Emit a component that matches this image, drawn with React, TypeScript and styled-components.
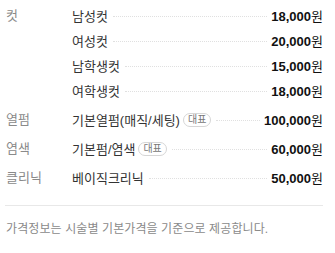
import React from "react"
import styled, { createGlobalStyle } from "styled-components"

interface PriceItem {
  name: string
  price: string
  featured?: boolean
}

interface PriceGroup {
  category: string
  items: PriceItem[]
}

const groups: PriceGroup[] = [
  {
    category: "컷",
    items: [
      { name: "남성컷", price: "18,000" },
      { name: "여성컷", price: "20,000" },
      { name: "남학생컷", price: "15,000" },
      { name: "여학생컷", price: "18,000" },
    ],
  },
  {
    category: "열펌",
    items: [{ name: "기본열펌(매직/세팅)", price: "100,000", featured: true }],
  },
  {
    category: "염색",
    items: [{ name: "기본펌/염색", price: "60,000", featured: true }],
  },
  {
    category: "클리닉",
    items: [{ name: "베이직크리닉", price: "50,000" }],
  },
]

const GlobalStyle = createGlobalStyle`
  body {
    margin: 0;
    background: #fff;
    font-family: "Liberation Sans", "Noto Sans CJK KR", sans-serif;
  }
`

export default function App() {
  return (
    <>
      <GlobalStyle />
      <S.Wrapper>
        <S.List>
          {groups.map((group) => (
            <S.Group key={group.category}>
              <S.Category>{group.category}</S.Category>
              <S.Items>
                {group.items.map((item) => (
                  <S.Row key={item.name}>
                    <S.Name>{item.name}</S.Name>
                    {item.featured && <S.Badge>대표</S.Badge>}
                    <S.Leader />
                    <S.Price>
                      <b>{item.price}</b>원
                    </S.Price>
                  </S.Row>
                ))}
              </S.Items>
            </S.Group>
          ))}
        </S.List>
        <S.Notice>가격정보는 시술별 기본가격을 기준으로 제공합니다.</S.Notice>
      </S.Wrapper>
    </>
  )
}

const S = {
  Wrapper: styled.div`
    width: 318px;
    padding: 3px 12px 0 5px;
  `,
  List: styled.div`
    display: flex;
    flex-direction: column;
    gap: 4px;
    padding-bottom: 15px;
    border-bottom: 1px solid #e8e8e8;
  `,
  Group: styled.div`
    display: grid;
    grid-template-columns: 67px 1fr;
  `,
  Category: styled.div`
    padding-left: 1px;
    height: 25px;
    line-height: 25px;
    font-size: 13px;
    color: #8a8a8a;
  `,
  Items: styled.div`
    display: flex;
    flex-direction: column;
  `,
  Row: styled.div`
    display: flex;
    align-items: center;
    height: 25px;
    font-size: 13px;
  `,
  Name: styled.span`
    color: #333;
    white-space: nowrap;
  `,
  Badge: styled.span`
    margin-left: 3px;
    height: 14px;
    padding: 0 4px;
    border: 1px solid #d6d6d6;
    border-radius: 8px;
    box-sizing: border-box;
    font-size: 10px;
    line-height: 12px;
    color: #777;
  `,
  Leader: styled.span`
    flex: 1;
    margin: 1px 4px 0 5px;
    border-top: 1px dotted #e0e0e0;
  `,
  Price: styled.span`
    color: #111;
    white-space: nowrap;
    b {
      font-weight: 700;
    }
  `,
  Notice: styled.p`
    margin: 13px 0 0 1px;
    font-size: 12px;
    letter-spacing: 0.1px;
    color: #8a8a8a;
  `,
}
